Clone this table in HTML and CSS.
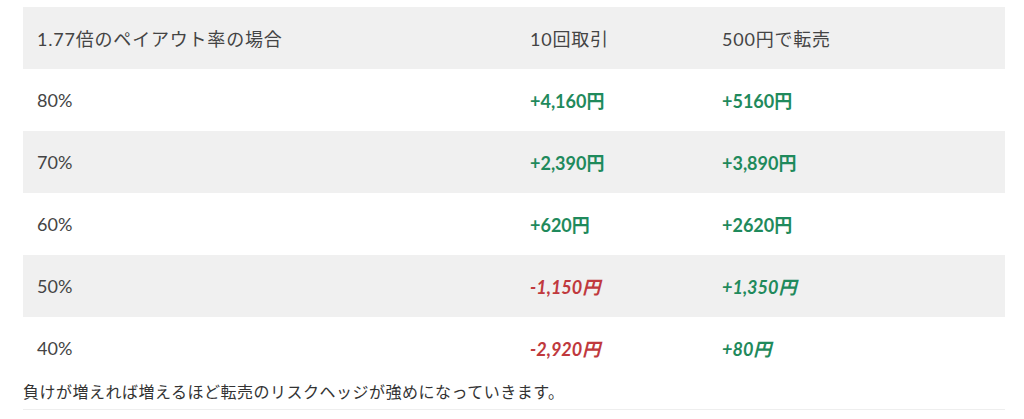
FILE: index.html
```html
<!DOCTYPE html>
<html lang="ja">
<head>
    <meta charset="UTF-8">
    <meta name="viewport" content="width=device-width, initial-scale=1.0">
    <title>ペイアウト率の比較</title>
    <link rel="stylesheet" href="styles.css">
</head>
<body>
    <div class="container">
        <table class="payout">
            <thead>
                <tr>
                    <th class="col-rate">1.77倍のペイアウト率の場合</th>
                    <th class="col-trade">10回取引</th>
                    <th class="col-resale">500円で転売</th>
                </tr>
            </thead>
            <tbody>
                <tr>
                    <td>80%</td>
                    <td class="plus">+4,160円</td>
                    <td class="plus">+5160円</td>
                </tr>
                <tr>
                    <td>70%</td>
                    <td class="plus">+2,390円</td>
                    <td class="plus">+3,890円</td>
                </tr>
                <tr>
                    <td>60%</td>
                    <td class="plus">+620円</td>
                    <td class="plus">+2620円</td>
                </tr>
                <tr>
                    <td>50%</td>
                    <td class="minus italic">-1,150円</td>
                    <td class="plus italic">+1,350円</td>
                </tr>
                <tr>
                    <td>40%</td>
                    <td class="minus italic">-2,920円</td>
                    <td class="plus italic">+80円</td>
                </tr>
            </tbody>
        </table>

        <p class="note">負けが増えれば増えるほど転売のリスクヘッジが強めになっていきます。</p>
    </div>
</body>
</html>
```

FILE: styles.css
```css
* {
    box-sizing: border-box;
    margin: 0;
    padding: 0;
}

body {
    background-color: #fff;
    color: #333;
    font-family: 'Lato', 'Noto Sans CJK JP', sans-serif;
}

.container {
    width: 982px;
    margin-left: 23px;
    padding-top: 7px;
}

table {
    width: 100%;
    border-collapse: collapse;
    table-layout: fixed;
}

th, td {
    height: 62px;
    padding: 0 14px;
    text-align: left;
    vertical-align: middle;
    font-size: 18px;
    font-weight: normal;
    color: #444;
}

th {
    letter-spacing: 0.8px;
}

.col-rate {
    width: 493px;
}

.col-trade {
    width: 192px;
}

thead tr,
tbody tr:nth-child(even) {
    background-color: #f0f0f0;
}

td.plus {
    color: #1f8a5c;
    font-weight: bold;
}

td.minus {
    color: #c0393d;
    font-weight: bold;
}

td.italic {
    font-style: italic;
}

.note {
    font-size: 16px;
    line-height: 24px;
    letter-spacing: 0.5px;
    padding: 1px 0 5px;
    border-bottom: 1px solid #eee;
    color: #333;
}
```
